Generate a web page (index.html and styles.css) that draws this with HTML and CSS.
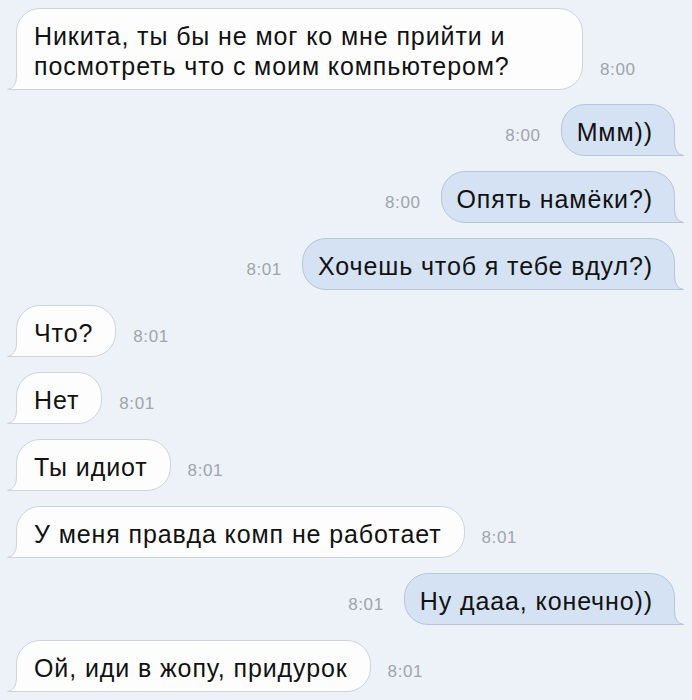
FILE: index.html
```html
<!DOCTYPE html>
<html lang="ru">
<head>
<meta charset="utf-8">
<title>Чат</title>
<link rel="stylesheet" href="styles.css">
</head>
<body>
<div class="chat">
  <div class="row in first">
    <div class="bubble wide">Никита, ты бы не мог ко мне прийти и<br>посмотреть что с моим компьютером?<svg class="tail" width="12" height="16" viewBox="0 0 12 16"><path class="tf" d="M10.5 0 L10.5 16 L0 16 L0.5 15.5 Q9.5 14 9.5 2 L9.5 0 Z"/><path class="ts" d="M9.5 0 L9.5 2 Q9.5 14 0.5 15.5 L12 15.5"/></svg></div>
    <span class="time">8:00</span>
  </div>
  <div class="row out">
    <span class="time">8:00</span>
    <div class="bubble">Ммм))<svg class="tail" width="12" height="16" viewBox="0 0 12 16"><path class="tf" d="M10.5 0 L10.5 16 L0 16 L0.5 15.5 Q9.5 14 9.5 2 L9.5 0 Z"/><path class="ts" d="M9.5 0 L9.5 2 Q9.5 14 0.5 15.5 L12 15.5"/></svg></div>
  </div>
  <div class="row out">
    <span class="time">8:00</span>
    <div class="bubble">Опять намёки?)<svg class="tail" width="12" height="16" viewBox="0 0 12 16"><path class="tf" d="M10.5 0 L10.5 16 L0 16 L0.5 15.5 Q9.5 14 9.5 2 L9.5 0 Z"/><path class="ts" d="M9.5 0 L9.5 2 Q9.5 14 0.5 15.5 L12 15.5"/></svg></div>
  </div>
  <div class="row out">
    <span class="time">8:01</span>
    <div class="bubble">Хочешь чтоб я тебе вдул?)<svg class="tail" width="12" height="16" viewBox="0 0 12 16"><path class="tf" d="M10.5 0 L10.5 16 L0 16 L0.5 15.5 Q9.5 14 9.5 2 L9.5 0 Z"/><path class="ts" d="M9.5 0 L9.5 2 Q9.5 14 0.5 15.5 L12 15.5"/></svg></div>
  </div>
  <div class="row in">
    <div class="bubble">Что?<svg class="tail" width="12" height="16" viewBox="0 0 12 16"><path class="tf" d="M10.5 0 L10.5 16 L0 16 L0.5 15.5 Q9.5 14 9.5 2 L9.5 0 Z"/><path class="ts" d="M9.5 0 L9.5 2 Q9.5 14 0.5 15.5 L12 15.5"/></svg></div>
    <span class="time">8:01</span>
  </div>
  <div class="row in">
    <div class="bubble">Нет<svg class="tail" width="12" height="16" viewBox="0 0 12 16"><path class="tf" d="M10.5 0 L10.5 16 L0 16 L0.5 15.5 Q9.5 14 9.5 2 L9.5 0 Z"/><path class="ts" d="M9.5 0 L9.5 2 Q9.5 14 0.5 15.5 L12 15.5"/></svg></div>
    <span class="time">8:01</span>
  </div>
  <div class="row in">
    <div class="bubble">Ты идиот<svg class="tail" width="12" height="16" viewBox="0 0 12 16"><path class="tf" d="M10.5 0 L10.5 16 L0 16 L0.5 15.5 Q9.5 14 9.5 2 L9.5 0 Z"/><path class="ts" d="M9.5 0 L9.5 2 Q9.5 14 0.5 15.5 L12 15.5"/></svg></div>
    <span class="time">8:01</span>
  </div>
  <div class="row in">
    <div class="bubble">У меня правда комп не работает<svg class="tail" width="12" height="16" viewBox="0 0 12 16"><path class="tf" d="M10.5 0 L10.5 16 L0 16 L0.5 15.5 Q9.5 14 9.5 2 L9.5 0 Z"/><path class="ts" d="M9.5 0 L9.5 2 Q9.5 14 0.5 15.5 L12 15.5"/></svg></div>
    <span class="time">8:01</span>
  </div>
  <div class="row out">
    <span class="time">8:01</span>
    <div class="bubble">Ну дааа, конечно))<svg class="tail" width="12" height="16" viewBox="0 0 12 16"><path class="tf" d="M10.5 0 L10.5 16 L0 16 L0.5 15.5 Q9.5 14 9.5 2 L9.5 0 Z"/><path class="ts" d="M9.5 0 L9.5 2 Q9.5 14 0.5 15.5 L12 15.5"/></svg></div>
  </div>
  <div class="row in">
    <div class="bubble">Ой, иди в жопу, придурок<svg class="tail" width="12" height="16" viewBox="0 0 12 16"><path class="tf" d="M10.5 0 L10.5 16 L0 16 L0.5 15.5 Q9.5 14 9.5 2 L9.5 0 Z"/><path class="ts" d="M9.5 0 L9.5 2 Q9.5 14 0.5 15.5 L12 15.5"/></svg></div>
    <span class="time">8:01</span>
  </div>
</div>
</body>
</html>
```
FILE: styles.css
```css
html, body {
  margin: 0;
  padding: 0;
  background: #edf1f8;
}
body {
  width: 692px;
  height: 700px;
  overflow: hidden;
  font-family: "Liberation Sans", Arial, sans-serif;
  color: #121212;
}
.chat {
  display: flex;
  flex-direction: column;
  gap: 15px;
  padding-top: 8px;
}
.row {
  display: flex;
  align-items: last baseline;
  gap: 17px;
}
.row.first {
  margin-bottom: -1px;
}
.row.in {
  justify-content: flex-start;
  padding-left: 16px;
}
.row.out {
  justify-content: flex-end;
  padding-right: 17px;
  gap: 20px;
}
.bubble {
  position: relative;
  font-size: 25px;
  letter-spacing: 0.9px;
  line-height: 30px;
  padding: 12px 22px 8px 17px;
  border-radius: 24px;
  border: 1px solid #cfd3da;
  background: #fdfdfe;
  white-space: nowrap;
}
.bubble.wide {
  box-sizing: border-box;
  width: 567px;
}
.row.in .bubble {
  border-bottom-left-radius: 0;
}
.row.out .bubble {
  background: #d5e2f3;
  border-color: #b7c6da;
  border-bottom-right-radius: 0;
  padding: 12px 21px 8px 15px;
}
.tail {
  position: absolute;
  bottom: -1px;
  left: -10px;
  overflow: visible;
}
.row.out .tail {
  left: auto;
  right: -10px;
  transform: scaleX(-1);
}
.tf {
  fill: #fdfdfe;
}
.ts {
  fill: none;
  stroke: #cfd3da;
  stroke-width: 1;
}
.row.out .tf {
  fill: #d5e2f3;
}
.row.out .ts {
  stroke: #b7c6da;
}
.time {
  font-size: 17px;
  letter-spacing: 0.6px;
  color: #a0a4ab;
}
```
